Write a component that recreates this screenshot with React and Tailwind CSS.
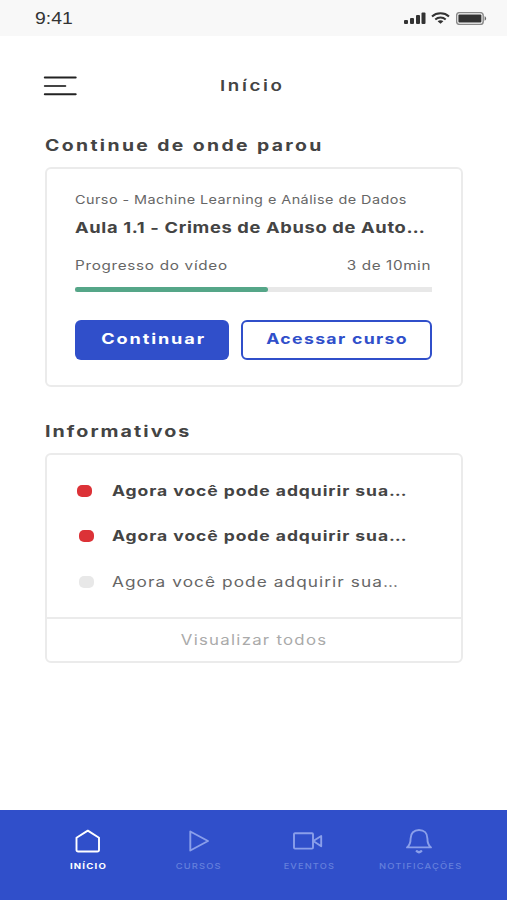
const notices = [
  { id: 1, text: "Agora você pode adquirir sua…", unread: true, dot: "ml-[30px] mr-[20px] bg-[#dc3237]" },
  { id: 2, text: "Agora você pode adquirir sua…", unread: true, dot: "ml-[32px] mr-[18px] bg-[#dc3237]" },
  { id: 3, text: "Agora você pode adquirir sua…", unread: false, dot: "ml-[32px] mr-[18px] bg-[#e8e8e8]" },
];

const StatusBar = () => {
  return (
    <div className="flex h-9 items-center bg-[#f8f8f8] pl-[35px] pr-5 text-[#333]">
      <span className="origin-left scale-x-[1.14] font-['Liberation_Sans'] text-[17px] leading-none">9:41</span>
      <div className="ml-auto flex items-center">
        {/* Signal */}
        <svg width="22" height="12" viewBox="0 0 22 12" fill="#333">
          <rect x="0" y="8" width="4" height="4" rx="1" />
          <rect x="6" y="6" width="4" height="6" rx="1" />
          <rect x="12" y="3" width="4" height="9" rx="1" />
          <rect x="17.5" y="0.5" width="4" height="11.5" rx="1" />
        </svg>
        {/* Wifi */}
        <svg className="ml-[5px]" width="19" height="12" viewBox="0 0 19 12" fill="none" stroke="#333" strokeWidth="2">
          <path d="M1 4.4C5.6 0.1 13.4 0.1 18 4.4" />
          <path d="M4.3 7.4C7.2 4.7 11.8 4.7 14.7 7.4" />
          <path d="M6.6 9.2C8.2 7.9 10.8 7.9 12.4 9.2L9.5 11.8Z" fill="#333" stroke="none" />
        </svg>
        {/* Battery */}
        <svg className="ml-[6px]" width="31" height="13" viewBox="0 0 31 13" fill="none">
          <rect x="0.6" y="0.6" width="26.6" height="11.8" rx="3" stroke="#888" strokeWidth="1.4" />
          <rect x="2.4" y="2.4" width="23" height="8.2" rx="1" fill="#333" />
          <path d="M28.6 4.3C30.6 5 30.6 8 28.6 8.7Z" fill="#666" />
        </svg>
      </div>
    </div>
  )
}

const NavItem = ({ label, labelClass, className, children }) => {
  return (
    <a className={`flex flex-col items-center ${className}`}>
      <div className="flex h-[27px] items-center justify-center">{children}</div>
      <span className={`mt-[7px] whitespace-nowrap text-[8px] leading-[10px] ${labelClass}`}>{label}</span>
    </a>
  )
}

const App = () => {
  return (
    <div className="flex h-[900px] w-[507px] flex-col overflow-hidden bg-white font-['Inter',sans-serif] text-[#444]">
      <StatusBar />

      <header className="flex h-[100px] items-center pl-[43px]">
        <svg width="34" height="20" viewBox="0 0 34 20" stroke="#222" strokeWidth="2" strokeLinecap="round">
          <path d="M1.8 1.5H32.7M1.8 18.3H32.7" />
          <path d="M1.8 9.9H22.3" stroke="#444" />
        </svg>
        <h1 className="ml-[143px] origin-left scale-x-125 text-[15px] font-semibold leading-5 tracking-[2.1px]">Início</h1>
      </header>

      <main className="flex flex-1 flex-col pl-[45px] pr-11">
        <h2 className="h-5 w-max origin-left scale-x-125 whitespace-nowrap text-[15.5px] font-bold leading-5 tracking-[1.9px]">Continue de onde parou</h2>

        {/* Current lesson */}
        <section className="mt-[11px] h-[220px] rounded-md border-2 border-[#ebebeb] pl-[28.4px] pr-[28.6px] pt-[23px]">
          <p className="w-max origin-left scale-x-[1.2] whitespace-nowrap text-[12px] leading-4 tracking-[0.38px] text-[#666]">Curso - Machine Learning e Análise de Dados</p>
          <h3 className="mt-2.5 w-max origin-left scale-x-[1.22] whitespace-nowrap text-[15px] font-bold leading-5 tracking-[0.53px]">Aula 1.1 - Crimes de Abuso de Auto…</h3>
          <div className="mt-[19px] flex justify-between pr-[1.5px] text-[12.5px] leading-[18px] text-[#666]">
            <span className="origin-left scale-x-[1.22] whitespace-nowrap tracking-[0.58px]">Progresso do vídeo</span>
            <span className="origin-right scale-x-[1.22] whitespace-nowrap tracking-[0.5px]">3 de 10min</span>
          </div>
          <div className="mt-3 h-[5px] bg-[#e8e8e8]">
            <div className="h-full w-[193px] rounded-full bg-[#55a688]"></div>
          </div>
          <div className="mt-7 flex gap-3 text-[14.5px] font-bold">
            <button className="flex h-10 w-[154px] justify-center rounded-md bg-[#304fca] pt-[9px] leading-5 text-white">
              <span className="translate-x-[0.7px] scale-x-125 tracking-[1.5px]">Continuar</span>
            </button>
            <button className="flex h-10 flex-1 justify-center rounded-md border-2 border-[#304fca] pt-[7px] leading-5 text-[#304fca]">
              <span className="scale-x-[1.22] whitespace-nowrap tracking-[1.08px]">Acessar curso</span>
            </button>
          </div>
        </section>

        <h2 className="mt-[35px] h-5 w-max origin-left scale-x-[1.27] text-[15.5px] font-bold leading-5 tracking-[1.6px]">Informativos</h2>

        {/* Notices */}
        <section className="mt-[11px] flex h-[210px] flex-col rounded-md border-2 border-[#ebebeb]">
          <ul className="flex h-[162px] shrink-0 flex-col gap-[25.3px] pt-[26px]">
            {notices.map((item) => (
              <li key={item.id} className="flex items-center">
                <span className={`h-3 w-[15px] shrink-0 rounded-[5px] ${item.dot}`}></span>
                <span className={item.unread
                  ? "origin-left scale-x-125 whitespace-nowrap text-[14px] font-bold leading-5 tracking-[0.75px]"
                  : "origin-left scale-x-[1.23] whitespace-nowrap text-[14px] leading-5 tracking-[0.88px] text-[#666]"}>{item.text}</span>
              </li>
            ))}
          </ul>
          <a className="flex flex-1 items-center justify-center border-t-2 border-[#ebebeb] pb-[2px] text-[14px] text-[#aaa]">
            <span className="scale-x-[1.2] tracking-[1.05px]">Visualizar todos</span>
          </a>
        </section>
      </main>

      <nav className="flex h-[90px] bg-[#304fca] pt-[17px] text-[#8a9fea]">
        <NavItem label="INÍCIO" className="ml-[33px] w-[110px] text-white" labelClass="scale-x-[1.2] font-bold tracking-[1px]">
          <svg width="26" height="24" viewBox="0 0 26 24" fill="none" stroke="currentColor" strokeWidth="1.9" strokeLinejoin="round">
            <path d="M12.8 1.6L24 8.8V21Q24 22.5 22.3 22.5H3.2Q1.5 22.5 1.5 21V8.8Z" />
          </svg>
        </NavItem>
        <NavItem label="CURSOS" className="w-[112px]" labelClass="scale-x-[1.17] font-medium tracking-[1px] text-[#6580dc]">
          <svg width="22" height="22" viewBox="0 0 22 22" fill="none" stroke="currentColor" strokeWidth="1.9" strokeLinejoin="round">
            <path d="M2.3 1.5L20 11L2.3 20.5Z" />
          </svg>
        </NavItem>
        <NavItem label="EVENTOS" className="w-[108px]" labelClass="scale-x-[1.15] font-medium tracking-[1px] text-[#6580dc]">
          <svg className="-ml-[2px] mt-px" width="30" height="18" viewBox="0 0 30 18" fill="none" stroke="currentColor" strokeWidth="1.9" strokeLinejoin="round">
            <rect x="1" y="1.2" width="19" height="15.4" rx="1" />
            <path d="M20.3 9L28.2 4V14.3Z" />
          </svg>
        </NavItem>
        <NavItem label="NOTIFICAÇÕES" className="w-[115px]" labelClass="scale-x-[1.17] font-medium tracking-[1px] text-[#6580dc]">
          <svg className="-ml-[4px]" width="28" height="26" viewBox="0 0 28 26" fill="none" stroke="currentColor" strokeWidth="1.9" strokeLinecap="round" strokeLinejoin="round">
            <path d="M2 19.4C4.7 17.4 5.6 15 5.6 10.4C5.6 5.2 9 2 14 2S22.4 5.2 22.4 10.4C22.4 15 23.3 17.4 26 19.4Z" />
            <path d="M11.8 23.2Q14 25.2 16.2 23.2" strokeWidth="2.4" />
          </svg>
        </NavItem>
      </nav>
    </div>
  )
}

export default App
